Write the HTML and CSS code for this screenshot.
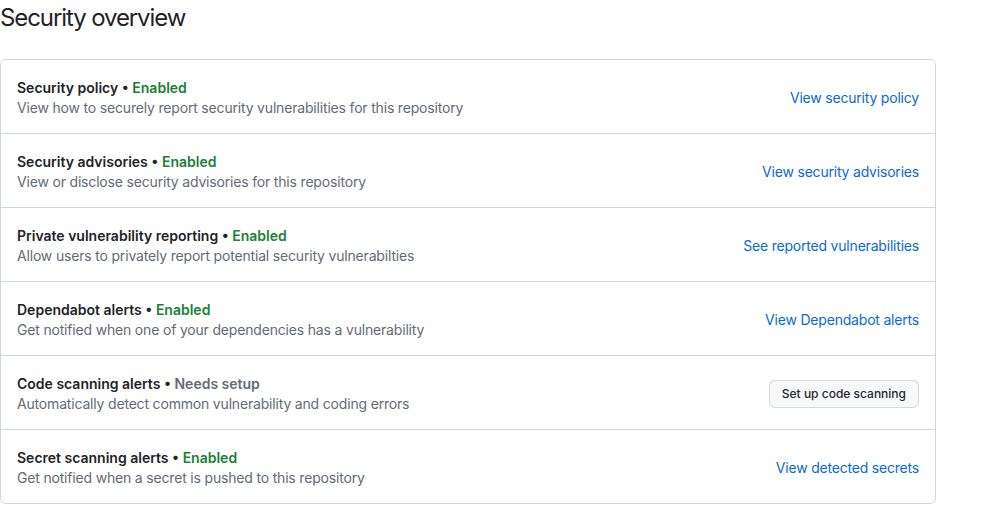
FILE: index.html
```html
<!DOCTYPE html>
<html>
<head>
<meta charset="utf-8">
<link rel="stylesheet" href="styles.css">
</head>
<body>
<div class="page">
  <h2 class="title">Security overview</h2>
  <div class="box">
    <div class="row">
      <div class="info">
        <div class="name">Security policy • <span class="ok">Enabled</span></div>
        <div class="desc">View how to securely report security vulnerabilities for this repository</div>
      </div>
      <a class="link" href="#">View security policy</a>
    </div>
    <div class="row">
      <div class="info">
        <div class="name">Security advisories • <span class="ok">Enabled</span></div>
        <div class="desc">View or disclose security advisories for this repository</div>
      </div>
      <a class="link" href="#">View security advisories</a>
    </div>
    <div class="row">
      <div class="info">
        <div class="name">Private vulnerability reporting • <span class="ok">Enabled</span></div>
        <div class="desc">Allow users to privately report potential security vulnerabilties</div>
      </div>
      <a class="link" href="#">See reported vulnerabilities</a>
    </div>
    <div class="row">
      <div class="info">
        <div class="name">Dependabot alerts • <span class="ok">Enabled</span></div>
        <div class="desc">Get notified when one of your dependencies has a vulnerability</div>
      </div>
      <a class="link" href="#">View Dependabot alerts</a>
    </div>
    <div class="row">
      <div class="info">
        <div class="name">Code scanning alerts • <span class="muted">Needs setup</span></div>
        <div class="desc">Automatically detect common vulnerability and coding errors</div>
      </div>
      <button class="btn">Set up code scanning</button>
    </div>
    <div class="row">
      <div class="info">
        <div class="name">Secret scanning alerts • <span class="ok">Enabled</span></div>
        <div class="desc">Get notified when a secret is pushed to this repository</div>
      </div>
      <a class="link" href="#">View detected secrets</a>
    </div>
  </div>
</div>
</body>
</html>
```
FILE: styles.css
```css
html, body {
  margin: 0;
  padding: 0;
  background: #ffffff;
}
body {
  font-family: Inter, "Liberation Sans", Arial, sans-serif;
  color: #1f2328;
  font-size: 14px;
}
.page {
  width: 936px;
}
.title {
  margin: 0 0 23px 0;
  font-size: 24px;
  font-weight: 400;
  line-height: 36px;
  letter-spacing: -1.1px;
}
.box {
  border: 1px solid #d0d7de;
  border-radius: 6px;
}
.row {
  display: flex;
  align-items: center;
  justify-content: space-between;
  padding: 17px 16px 15px 16px;
  border-top: 1px solid #d0d7de;
  height: 41px;
}
.row:first-child {
  border-top: none;
}
.name {
  font-weight: 600;
  line-height: 21px;
}
.ok {
  color: #1a7f37;
}
.muted {
  color: #636c76;
}
.desc {
  color: #636c76;
  line-height: 20px;
  letter-spacing: -0.18px;
}
.link {
  color: #0969da;
  text-decoration: none;
  line-height: 21px;
  letter-spacing: -0.2px;
}
.btn {
  font-family: inherit;
  font-size: 12px;
  font-weight: 500;
  color: #24292f;
  background: #f6f8fa;
  border: 1px solid rgba(31, 35, 40, 0.15);
  border-radius: 6px;
  height: 28px;
  padding: 0 12px;
  line-height: 26px;
}
```
